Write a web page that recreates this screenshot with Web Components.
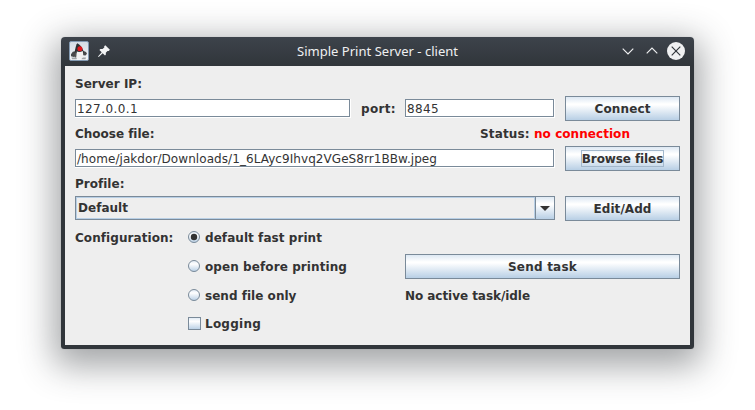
<!DOCTYPE html>
<html lang="en">
<head>
<meta charset="utf-8">
<title>Simple Print Server - client</title>
<style>
html,body{margin:0;width:755px;height:410px;overflow:hidden;background:#fff}
body{box-sizing:border-box;padding:37px 61px 61px;font:bold 12px/17px "DejaVu Sans",sans-serif;color:#333}
</style>
</head>
<body>
<print-client></print-client>
<script>
const define = (name, html, setup) => customElements.define(name, class extends HTMLElement {
  connectedCallback() {
    if (this.shadowRoot) return;
    const t = document.createElement('template');
    t.innerHTML = html;
    this.attachShadow({mode: 'open'}).append(t.content.cloneNode(true));
    if (setup) setup(this);
  }
});

/* Text spread evenly over the advance width given in "w". */
define('fit-text', `<style>:host{display:inline-block;white-space:pre;flex:none}span{display:inline-block}</style><span><slot></slot></span>`, el => {
  const span = el.shadowRoot.querySelector('span');
  const w = +el.getAttribute('w'), n = el.textContent.length;
  span.style.letterSpacing = (w - span.getBoundingClientRect().width) / n + 'px';
});

define('swing-button', `<style>
:host{display:flex;box-sizing:border-box;height:25px;border:1px solid #7a8a99;align-items:center;justify-content:center;
background:linear-gradient(#dde8f3 0,#fff 30%,#fff 34%,#b8cfe5 100%)}
div{border:1px solid transparent;line-height:17px;height:15px}
:host([focused]) div{border-color:#a3b8cc}
</style><div><slot></slot></div>`);

define('swing-field', `<style>
:host{display:block;box-sizing:border-box;height:19px;background:#fff;padding:0 1px 1px 0;font-weight:400}
div{box-sizing:border-box;height:18px;border:1px solid #7a8a99;padding:1px 0 0 1px;line-height:17px}
</style><div><slot></slot></div>`);

define('swing-combo', `<style>
:host{display:grid;grid-template-columns:1fr 19px;box-sizing:border-box;height:24px;border:1px solid #7a8a99}
div{border:1px solid #b8cfe5;padding-left:1px;line-height:20px}
span{border-left:1px solid #7a8a99;background:linear-gradient(#dde8f3 0,#fff 30%,#fff 34%,#b8cfe5 100%);display:grid;place-items:center}
svg{display:block}
</style><div><slot></slot></div><span><svg width="10" height="5"><path d="M0 0H10L5 5Z" fill="#333"/></svg></span>`);

define('swing-option', `<style>
:host{display:flex;align-items:center;gap:5px;padding-top:2px}
svg{display:block;width:12px;height:12px;overflow:visible;margin-top:-3px}
.dot,.box{display:none}
:host([checked]) .dot{display:block}
:host([square]) .ring,:host([square]) .dot{display:none}
:host([square]) .box{display:block}
:host([square]){padding-top:0}
</style><svg viewBox="0 0 12 12"><defs><linearGradient id="g" x2="0" y2="1"><stop stop-color="#dde8f3"/><stop offset=".32" stop-color="#fff"/><stop offset="1" stop-color="#b8cfe5"/></linearGradient></defs>
<circle class="ring" cx="6" cy="6" r="5.5" fill="url(#g)" stroke="#7a8a99"/>
<circle class="dot" cx="6" cy="6" r="3.2" fill="#333"/>
<rect class="box" x=".5" y=".5" width="12" height="12" fill="url(#g)" stroke="#7a8a99"/></svg><slot></slot>`);

define('title-bar', `<style>
:host{display:grid;grid-template-columns:1fr auto 1fr;align-items:center;height:29px;font:400 13px/18px "Noto Sans",sans-serif;color:#eff0f1}
svg{display:block}.l{display:flex;align-items:center;padding-left:4px;gap:8px;margin-top:-1px}.r{display:flex;justify-content:flex-end;padding-right:5px;margin-top:-1px}
fit-text{margin-top:-2px}
</style>
<div class="l">
<svg width="20" height="20" viewBox="0 0 20 20"><defs><linearGradient id="i" x2="0" y2="1"><stop stop-color="#d3dbe4"/><stop offset="1" stop-color="#f4f6f8"/></linearGradient></defs>
<rect x=".5" y=".5" width="19" height="19" rx="1.5" fill="url(#i)" stroke="#8299b1"/>
<path d="M2.5 16.5H8L7.5 18.2H3ZM13 16.5H17L16.5 18.2H12.5Z" fill="#a0a3a6"/>
<path d="M6.2 10.3 3.8 10.8 2 13.2 2 15.2 5 16 7.2 15ZM14 9.8 17 11 18 12.8 16.5 14.5 14 14.2Z" fill="#48494b"/>
<path d="M8.4 2.2C7.3 3 6.6 6.2 6 9L5.6 12H14.6L14.2 9.5C13 6 10.8 3.4 8.4 2.2Z" fill="#2d2f32"/>
<path d="M7.8 10.6Q10.5 11.8 13.8 10L14.4 15.8 12.8 17.6 11 16.8 9 18 7 16.2Z" fill="#f0f0f0"/>
<path d="M6 11.5 7.8 11 7.2 16.4 5.8 16.2Z" fill="#555"/>
<circle cx="10.9" cy="7.7" r="2.5" fill="#e0181e"/></svg>
<svg width="14" height="14" viewBox="0 0 14 14"><path d="M8.3 1.2 12.9 5.8 11.7 6.9 10.5 6.9 8.8 8.7 8.9 10.6 8 11.6 5.7 9.3 1.7 13 1 12.4 4.7 8.3 2.4 6 3.4 5 5.5 5.1 7.3 3.5 7.2 2.3Z" fill="#f4f5f6"/></svg>
</div>
<fit-text w="161">Simple Print Server - client</fit-text>
<div class="r"><svg width="63" height="18" viewBox="0 0 63 18" fill="none" stroke="#eff0f1" stroke-width="1.15"><path d="M.7 6.6 6 11.9 11.3 6.6M24.7 11.4 30 6.1 35.3 11.4"/><circle cx="54" cy="9" r="9" fill="#eff0f1" stroke="none"/><path d="M49.7 4.7 58.3 13.3M58.3 4.7 49.7 13.3" stroke="#31363b"/></svg></div>`);

define('print-client', `<style>
:host{display:block;box-sizing:border-box;width:633px;height:312px;padding:0 4px 4px;border-radius:4px 4px 3px 3px;
background:linear-gradient(#3d434b 0,#31363b 28px);box-shadow:0 0 1px rgba(49,54,59,.3),0 10px 34px 7px rgba(45,50,55,.44)}
main{background:#eee;height:279px;box-sizing:border-box;padding:9px 10px 0;display:grid;
grid-template-columns:113px 217px 150px 125px;grid-template-rows:17px 25px 17px 25px 17px 25px 25px 25px 25px 25px;row-gap:4px;align-items:center}
.w3{grid-column:1/4}
.w4{grid-column:1/5}
div.w4,.c1,fit-text.c34,.addr>fit-text{padding-top:2px}
.addr{display:grid;grid-template-columns:276px 34px 150px;column-gap:10px;align-items:center}
swing-button{margin-left:10px}
.split{display:grid;grid-template-columns:405px 1fr}
.c1{grid-column:1}.c2{grid-column:2}
.c34{grid-column:3/5}
.red{color:#f00}
</style>
<title-bar></title-bar>
<main>
<div class="w4"><fit-text w="67">Server IP:</fit-text></div>
<div class="w3 addr"><swing-field><fit-text w="61">127.0.0.1</fit-text></swing-field><fit-text w="35">port:</fit-text><swing-field><fit-text w="32">8845</fit-text></swing-field></div>
<swing-button><fit-text w="56">Connect</fit-text></swing-button>
<div class="w4 split"><fit-text w="79">Choose file:</fit-text><span><fit-text w="54">Status: </fit-text><fit-text class="red" w="96">no connection</fit-text></span></div>
<swing-field class="w3"><fit-text w="360">/home/jakdor/Downloads/1_6LAyc9Ihvq2VGeS8rr1BBw.jpeg</fit-text></swing-field>
<swing-button focused><fit-text w="81">Browse files</fit-text></swing-button>
<div class="w4"><fit-text w="49">Profile:</fit-text></div>
<swing-combo class="w3" style="align-self:start"><fit-text w="50">Default</fit-text></swing-combo>
<swing-button><fit-text w="58">Edit/Add</fit-text></swing-button>
<fit-text class="c1" w="98">Configuration:</fit-text><swing-option class="c2" checked><fit-text w="117">default fast print</fit-text></swing-option>
<swing-option class="c2"><fit-text w="142">open before printing</fit-text></swing-option><swing-button class="c34" style="margin-left:0"><fit-text w="69">Send task</fit-text></swing-button>
<swing-option class="c2"><fit-text w="91">send file only</fit-text></swing-option><fit-text class="c34" w="125">No active task/idle</fit-text>
<swing-option class="c2" square><fit-text w="56">Logging</fit-text></swing-option>
</main>`);
</script>
</body>
</html>
